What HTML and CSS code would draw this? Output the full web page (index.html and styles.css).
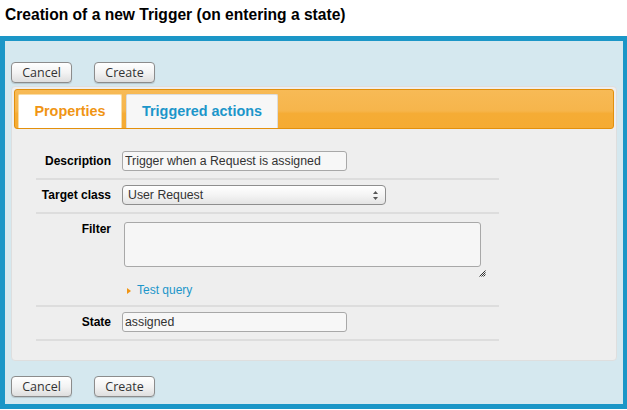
FILE: index.html
```html
<!DOCTYPE html>
<html>

<head>
    <title>Creation of a new Trigger</title>
    <meta charset='utf-8' />
    <link rel="stylesheet" href="styles.css">
</head>

<body>
    <h1 class="page-title">Creation of a new Trigger (on entering a state)</h1>

    <div class="wizard">
        <div class="actions">
            <button class="btn" type="button">Cancel</button>
            <button class="btn" type="button">Create</button>
        </div>

        <div class="panel">
            <ul class="tabs">
                <li class="tab active">Properties</li>
                <li class="tab tab-wide">Triggered actions</li>
            </ul>

            <table class="details">
                <tr>
                    <th>Description</th>
                    <td><input class="field field-short" type="text" value="Trigger when a Request is assigned" /></td>
                </tr>
                <tr>
                    <th>Target class</th>
                    <td>
                        <div class="select-wrap">
                            <select class="select">
                                <option>User Request</option>
                            </select>
                            <svg class="select-arrows" width="7" height="11" viewBox="0 0 7 11">
                                <path d="M3.5 1 L6 4 L1 4 Z" fill="#555" />
                                <path d="M1 7 L6 7 L3.5 10 Z" fill="#555" />
                            </svg>
                        </div>
                    </td>
                </tr>
                <tr class="row-top">
                    <th>Filter</th>
                    <td>
                        <div class="filter-box">
                            <textarea class="filter"></textarea>
                            <svg class="grip" width="7" height="7" viewBox="0 0 7 7">
                                <path d="M0.5 6.5 L6.5 0.5 M2.5 6.5 L6.5 2.5 M4.5 6.5 L6.5 4.5" stroke="#333" stroke-width="1" />
                            </svg>
                        </div>
                        <div class="test-query"><span class="arrow"></span><a href="#">Test query</a></div>
                    </td>
                </tr>
                <tr>
                    <th>State</th>
                    <td><input class="field field-short" type="text" value="assigned" /></td>
                </tr>
            </table>
        </div>

        <div class="actions actions-bottom">
            <button class="btn" type="button">Cancel</button>
            <button class="btn" type="button">Create</button>
        </div>
    </div>
</body>

</html>
```

FILE: styles.css
```css
body {
    margin: 0;
    font-family: "Liberation Sans", Arial, sans-serif;
    font-size: 12px;
    color: #000;
}

.page-title {
    margin: 0;
    padding: 6px 5px 12px;
    font-size: 15.6px;
    line-height: 18px;
    font-weight: bold;
}

.wizard {
    background: #d5e8ef;
    border: 5px solid #1b96c7;
    border-right-width: 4px;
    padding: 21px 6px 7px;
}

/* boutons */
.actions {
    display: flex;
    gap: 22px;
    margin-bottom: 3px;
}

.actions-bottom {
    margin: 15px 0 0;
}

.btn {
    font-family: "Open Sans", "Noto Sans", sans-serif;
    font-size: 12.5px;
    line-height: 17px;
    color: #333;
    padding: 1px 0;
    border: 1px solid #8c8c8c;
    border-radius: 4px;
    background: linear-gradient(#ffffff, #f3f3f3 50%, #dedede);
    box-shadow: 0 1px 1px rgba(0, 0, 0, 0.15);
    width: 61px;
}

/* panneau */
.panel {
    background: #eeeeee;
    border: 1px solid #dedede;
    border-radius: 4px;
    padding: 2px;
}

.tabs {
    list-style: none;
    margin: 0;
    height: 34px;
    padding: 4px 3px 0;
    display: flex;
    gap: 4px;
    border: 1px solid #e3900c;
    border-radius: 3px;
    background: linear-gradient(#f7ba56 0, #f6b54b 55%, #f5ac35 62%, #f5ab33 100%);
}

.tab {
    box-sizing: border-box;
    width: 104px;
    height: 34px;
    line-height: 33px;
    text-align: center;
    font-size: 14.4px;
    font-weight: bold;
    color: #1c96ca;
    background: #f7f7f7;
    border: 1px solid #dcdcdc;
    border-bottom: none;
    border-radius: 2px 2px 0 0;
}

.tab-wide {
    width: 152px;
}

.tab.active {
    color: #f09514;
    background: #fff;
    border-color: #f8dca6;
}

/* formulaire */
.details {
    border-collapse: collapse;
    margin: 17px 0 17px 22px;
    width: 463px;
}

.details tr {
    border-bottom: 2px solid #dddddd;
}

.details th {
    width: 70px;
    padding: 5px 5px 7px;
    text-align: right;
    font-size: 12px;
    white-space: nowrap;
}

.details td {
    padding: 5px 0 7px 6px;
}

.details .row-top th {
    vertical-align: top;
    padding-top: 8px;
}

.field {
    display: block;
    box-sizing: border-box;
    height: 20px;
    padding: 0 2px;
    font-family: "Liberation Sans", Arial, sans-serif;
    font-size: 12.3px;
    color: #333;
    background: #f7f7f7;
    border: 1px solid #a8a8a8;
    border-radius: 3px;
}

.field-short {
    width: 225px;
}

.select-wrap {
    position: relative;
    width: 264px;
}

.select {
    appearance: none;
    display: block;
    box-sizing: border-box;
    width: 264px;
    height: 20px;
    padding: 0 5px;
    font-family: "Liberation Sans", Arial, sans-serif;
    font-size: 12.3px;
    color: #333;
    border: 1px solid #8e8e8e;
    border-radius: 4px;
    background: linear-gradient(#ffffff, #f4f4f4 50%, #e4e4e4);
}

.select-arrows {
    position: absolute;
    right: 7px;
    top: 5px;
}

.filter-box {
    position: relative;
    width: 357px;
    padding: 3px 0 0 2px;
}

.filter {
    display: block;
    box-sizing: border-box;
    width: 357px;
    height: 45px;
    resize: none;
    background: #f6f6f6;
    border: 1px solid #a8a8a8;
    border-radius: 3px;
}

.grip {
    position: absolute;
    right: -5px;
    bottom: -10px;
}

.test-query {
    margin-top: 16px;
    padding-left: 5px;
    line-height: 15px;
    display: flex;
    align-items: center;
}

.test-query .arrow {
    width: 0;
    height: 0;
    border-top: 3px solid transparent;
    border-bottom: 3px solid transparent;
    border-left: 4px solid #f09514;
    margin-right: 6px;
}

.test-query a {
    color: #1c96ca;
    text-decoration: none;
    font-size: 12px;
}
```
